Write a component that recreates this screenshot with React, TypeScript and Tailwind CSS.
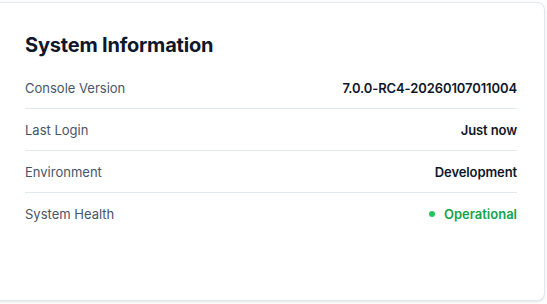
import React from "react";

const rows = [
  { label: "Console Version", value: "7.0.0-RC4-20260107011004" },
  { label: "Last Login", value: "Just now" },
  { label: "Environment", value: "Development" },
];

export default function App() {
  return (
    <div
      className="w-[547px] h-[304px] bg-white pt-[2px] pr-[2px] pb-[3px] overflow-hidden"
      style={{ fontFamily: "Inter, 'Noto Sans', sans-serif" }}
    >
      <div className="h-full -ml-[10px] pl-[34px] pr-[27px] pt-[28px] bg-white border border-[#e2e8f0] rounded-lg shadow-[0_1px_3px_rgba(15,23,42,0.12)]">
        <h2 className="text-[20px] leading-[28px] font-bold text-[#0f172a] tracking-[-0.2px]">
          System Information
        </h2>
        <div className="mt-2">
          {rows.map((r) => (
            <div
              key={r.label}
              className="flex items-center justify-between pt-[11px] pb-[10px] border-b border-[#e2e8f0]"
            >
              <span className="text-[13px] leading-[20px] text-[#475569]">{r.label}</span>
              <span className="text-[13px] leading-[20px] font-semibold text-[#0f172a] tracking-[-0.1px]">{r.value}</span>
            </div>
          ))}
          <div className="flex items-center justify-between pt-[11px] pb-[10px]">
            <span className="text-[13px] leading-[20px] text-[#475569]">System Health</span>
            <span className="flex items-center gap-[9px] text-[13px] leading-[20px] font-semibold text-[#16a34a]">
              <span className="w-[6px] h-[6px] rounded-full bg-[#22c55e]" />
              Operational
            </span>
          </div>
        </div>
      </div>
    </div>
  );
}
